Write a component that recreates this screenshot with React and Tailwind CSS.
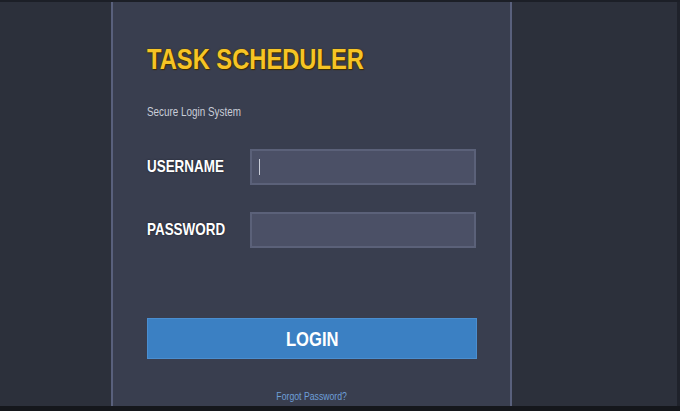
import React from "react";

// the source frame is squeezed horizontally, so text is narrowed to match
const narrow = "inline-block scale-x-[0.79] whitespace-nowrap";

export default function App() {
  return (
    <div
      className="w-[680px] h-[411px] overflow-hidden bg-[#2c303b] flex flex-col"
      style={{ fontFamily: '"Liberation Sans", Arial, sans-serif' }}
    >
      <div className="h-[2px] bg-[#1c1f27]" />
      <div className="flex-1 flex">
        <div className="w-[111px]" />
        {/* login card */}
        <div className="w-[401px] bg-[#393e4f] border-x-2 border-[#59607c] flex flex-col pl-[34px] pr-[34px]">
          <h1
            className="mt-[39px] text-[30px] leading-[36px] font-bold text-[#f6c425]"
            style={{ textShadow: "0 0 2px #4a3800, 1px 1px 1px #3a2c00" }}
          >
            <span className={`${narrow} origin-left`}>TASK SCHEDULER</span>
          </h1>
          <p className="mt-[28px] text-[12.5px] leading-[14px] text-[#c9cdd8]">
            <span className={`${narrow} origin-left`}>Secure Login System</span>
          </p>

          <div className="mt-[30px] flex items-center">
            <label
              className="w-[103px] text-[17px] font-bold text-white"
              style={{ textShadow: "0 0 2px #1a1d26" }}
            >
              <span className={`${narrow} origin-left`}>USERNAME</span>
            </label>
            <div className="w-[227px] h-[36px] bg-[#4b5066] border-2 border-[#5b6179] flex items-center pl-[7px]">
              <span className="w-[1px] h-[16px] bg-[#c9cdd8]" />
            </div>
          </div>

          <div className="mt-[27px] flex items-center">
            <label
              className="w-[103px] text-[17px] font-bold text-white"
              style={{ textShadow: "0 0 2px #1a1d26" }}
            >
              <span className={`${narrow} origin-left`}>PASSWORD</span>
            </label>
            <div className="w-[227px] h-[36px] bg-[#4b5066] border-2 border-[#5b6179]" />
          </div>

          <button className="mt-[70px] w-[330px] h-[41px] bg-[#3b80c3] border border-[#4a8ed0] text-white text-[21px] font-bold">
            <span className={`${narrow} origin-center`}>LOGIN</span>
          </button>

          <a className="mt-[31px] self-center text-[11px] leading-[13px] text-[#6e9fd8]">
            <span className={`${narrow} origin-center`}>Forgot Password?</span>
          </a>
        </div>
        <div className="flex-1" />
        <div className="w-[3px] bg-[#1f222b]" />
      </div>
      <div className="h-[5px] bg-[#15171c]" />
    </div>
  );
}
